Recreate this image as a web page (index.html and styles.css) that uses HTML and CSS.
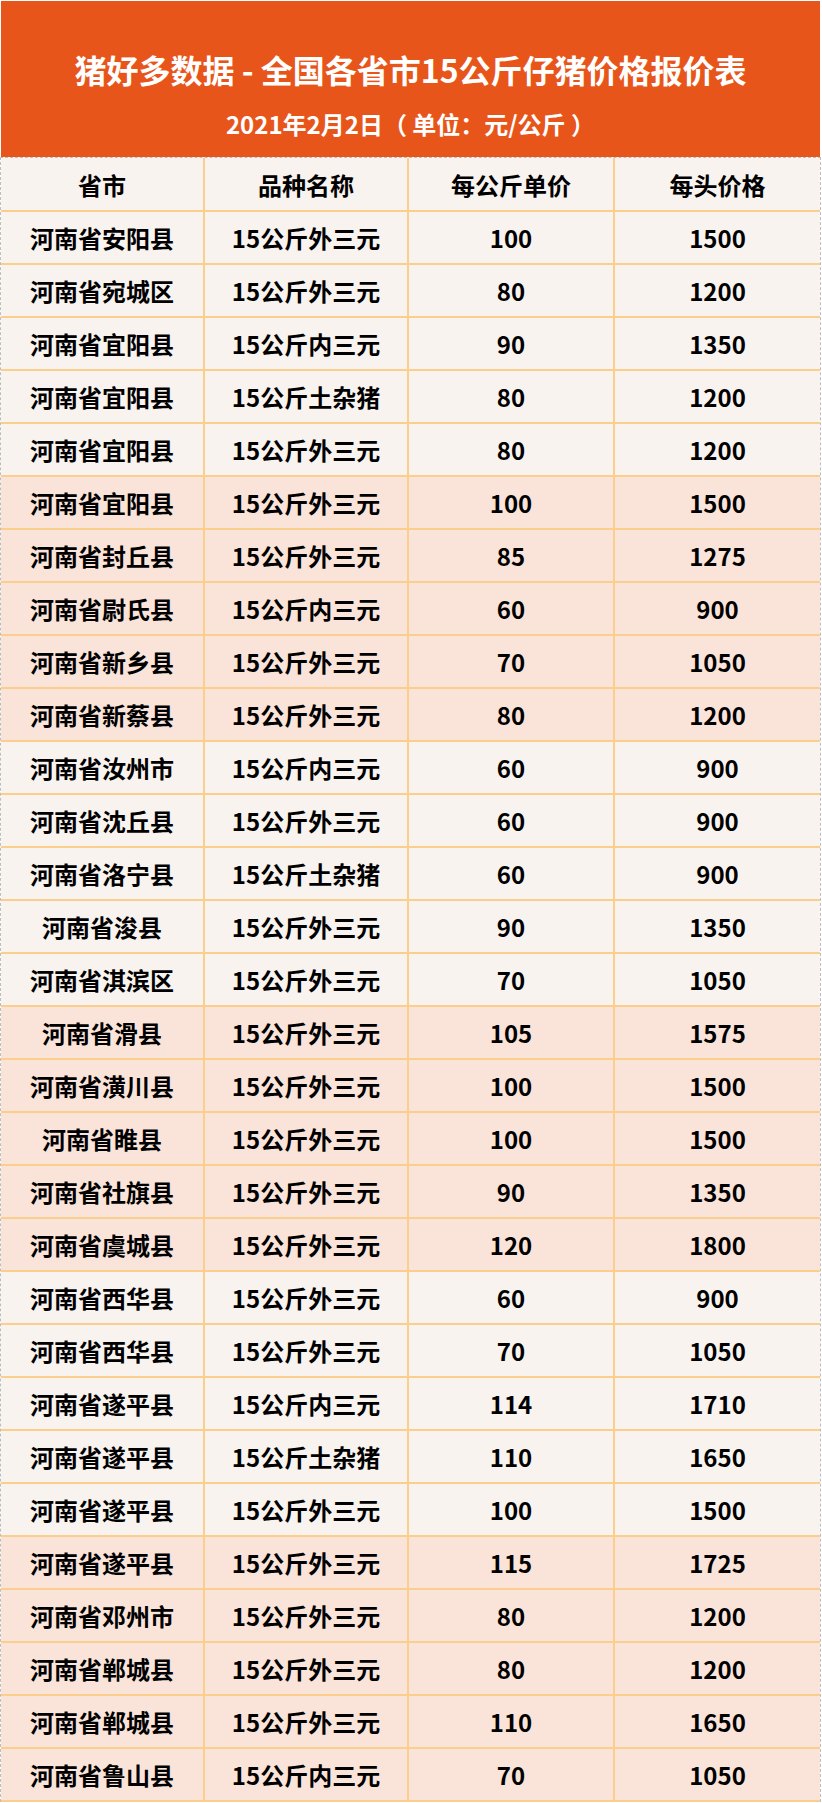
FILE: index.html
```html
<!DOCTYPE html>
<html lang="zh-CN">
<head>
<meta charset="utf-8">
<title>猪好多数据 - 全国各省市15公斤仔猪价格报价表</title>
<link rel="stylesheet" href="styles.css">
</head>
<body>
<div class="page">
  <header class="banner">
    <h1 class="title">猪好多数据 - 全国各省市15公斤仔猪价格报价表</h1>
    <p class="subtitle">2021年2月2日（ 单位：元/公斤 ）</p>
  </header>
  <div class="table">
    <div class="row head a"><div class="cell">省市</div><div class="cell">品种名称</div><div class="cell">每公斤单价</div><div class="cell">每头价格</div></div>
    <div class="row a"><div class="cell">河南省安阳县</div><div class="cell">15公斤外三元</div><div class="cell">100</div><div class="cell">1500</div></div>
    <div class="row a"><div class="cell">河南省宛城区</div><div class="cell">15公斤外三元</div><div class="cell">80</div><div class="cell">1200</div></div>
    <div class="row a"><div class="cell">河南省宜阳县</div><div class="cell">15公斤内三元</div><div class="cell">90</div><div class="cell">1350</div></div>
    <div class="row a"><div class="cell">河南省宜阳县</div><div class="cell">15公斤土杂猪</div><div class="cell">80</div><div class="cell">1200</div></div>
    <div class="row a"><div class="cell">河南省宜阳县</div><div class="cell">15公斤外三元</div><div class="cell">80</div><div class="cell">1200</div></div>
    <div class="row b"><div class="cell">河南省宜阳县</div><div class="cell">15公斤外三元</div><div class="cell">100</div><div class="cell">1500</div></div>
    <div class="row b"><div class="cell">河南省封丘县</div><div class="cell">15公斤外三元</div><div class="cell">85</div><div class="cell">1275</div></div>
    <div class="row b"><div class="cell">河南省尉氏县</div><div class="cell">15公斤内三元</div><div class="cell">60</div><div class="cell">900</div></div>
    <div class="row b"><div class="cell">河南省新乡县</div><div class="cell">15公斤外三元</div><div class="cell">70</div><div class="cell">1050</div></div>
    <div class="row b"><div class="cell">河南省新蔡县</div><div class="cell">15公斤外三元</div><div class="cell">80</div><div class="cell">1200</div></div>
    <div class="row a"><div class="cell">河南省汝州市</div><div class="cell">15公斤内三元</div><div class="cell">60</div><div class="cell">900</div></div>
    <div class="row a"><div class="cell">河南省沈丘县</div><div class="cell">15公斤外三元</div><div class="cell">60</div><div class="cell">900</div></div>
    <div class="row a"><div class="cell">河南省洛宁县</div><div class="cell">15公斤土杂猪</div><div class="cell">60</div><div class="cell">900</div></div>
    <div class="row a"><div class="cell">河南省浚县</div><div class="cell">15公斤外三元</div><div class="cell">90</div><div class="cell">1350</div></div>
    <div class="row a"><div class="cell">河南省淇滨区</div><div class="cell">15公斤外三元</div><div class="cell">70</div><div class="cell">1050</div></div>
    <div class="row b"><div class="cell">河南省滑县</div><div class="cell">15公斤外三元</div><div class="cell">105</div><div class="cell">1575</div></div>
    <div class="row b"><div class="cell">河南省潢川县</div><div class="cell">15公斤外三元</div><div class="cell">100</div><div class="cell">1500</div></div>
    <div class="row b"><div class="cell">河南省睢县</div><div class="cell">15公斤外三元</div><div class="cell">100</div><div class="cell">1500</div></div>
    <div class="row b"><div class="cell">河南省社旗县</div><div class="cell">15公斤外三元</div><div class="cell">90</div><div class="cell">1350</div></div>
    <div class="row b"><div class="cell">河南省虞城县</div><div class="cell">15公斤外三元</div><div class="cell">120</div><div class="cell">1800</div></div>
    <div class="row a"><div class="cell">河南省西华县</div><div class="cell">15公斤外三元</div><div class="cell">60</div><div class="cell">900</div></div>
    <div class="row a"><div class="cell">河南省西华县</div><div class="cell">15公斤外三元</div><div class="cell">70</div><div class="cell">1050</div></div>
    <div class="row a"><div class="cell">河南省遂平县</div><div class="cell">15公斤内三元</div><div class="cell">114</div><div class="cell">1710</div></div>
    <div class="row a"><div class="cell">河南省遂平县</div><div class="cell">15公斤土杂猪</div><div class="cell">110</div><div class="cell">1650</div></div>
    <div class="row a"><div class="cell">河南省遂平县</div><div class="cell">15公斤外三元</div><div class="cell">100</div><div class="cell">1500</div></div>
    <div class="row b"><div class="cell">河南省遂平县</div><div class="cell">15公斤外三元</div><div class="cell">115</div><div class="cell">1725</div></div>
    <div class="row b"><div class="cell">河南省邓州市</div><div class="cell">15公斤外三元</div><div class="cell">80</div><div class="cell">1200</div></div>
    <div class="row b"><div class="cell">河南省郸城县</div><div class="cell">15公斤外三元</div><div class="cell">80</div><div class="cell">1200</div></div>
    <div class="row b"><div class="cell">河南省郸城县</div><div class="cell">15公斤外三元</div><div class="cell">110</div><div class="cell">1650</div></div>
    <div class="row b"><div class="cell">河南省鲁山县</div><div class="cell">15公斤内三元</div><div class="cell">70</div><div class="cell">1050</div></div>
  </div>
</div>
</body>
</html>
```
FILE: styles.css
```css
html, body {
  margin: 0;
  padding: 0;
  background: #ffffff;
}
body {
  font-family: "Noto Sans CJK SC", "Noto Sans", sans-serif;
  font-weight: 700;
  color: #000;
}
.page {
  width: 821px;
  padding-top: 1px;
}
.banner {
  margin: 0 0 0 1px;
  width: 819px;
  height: 156px;
  background: #e8551a;
  color: #fff;
  display: flex;
  flex-direction: column;
  align-items: center;
  box-sizing: border-box;
  padding-top: 48px;
}
.title {
  margin: 0;
  font-size: 32px;
  line-height: 40px;
  font-weight: 700;
}
.subtitle {
  margin: 20px 0 0 0;
  font-size: 24px;
  line-height: 30px;
  font-weight: 700;
  white-space: pre;
}
.table {
  border-top: 1px dashed #bdbdbd;
  border-left: 1px dashed #bdbdbd;
  border-right: 1px dashed #bdbdbd;
}
.row {
  display: grid;
  grid-template-columns: 204px 204px 206px 1fr;
  height: 53px;
  box-sizing: border-box;
  border-bottom: 2px solid #fbcf8b;
}
.row.head {
  height: 54px;
}
.row.a { background: #f8f3ef; }
.row.b { background: #fae4d9; }
.cell {
  display: flex;
  align-items: center;
  justify-content: center;
  font-size: 24px;
  border-right: 2px solid #fbcf8b;
}
.cell:last-child {
  border-right: none;
}
```
